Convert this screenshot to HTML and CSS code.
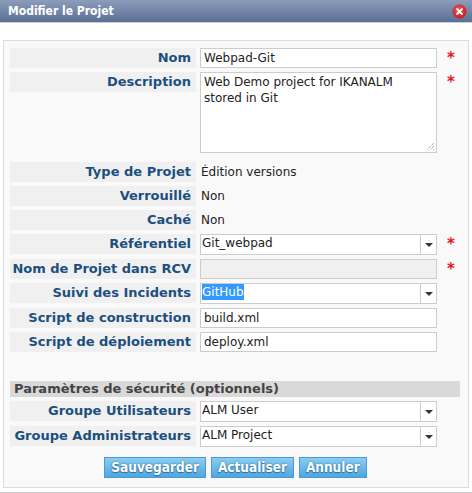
FILE: index.html
```html
<!DOCTYPE html>
<html lang="fr">
<head>
<meta charset="utf-8">
<title>Modifier le Projet</title>
<link rel="stylesheet" href="styles.css">
</head>
<body>
<div class="dialog">
  <div class="titlebar">
    <span class="title">Modifier le Projet</span>
    <svg class="close" width="15" height="15" viewBox="0 0 15 15">
      <defs>
        <radialGradient id="rg" cx="0.45" cy="0.4" r="0.6">
          <stop offset="0" stop-color="#f25a5a"/>
          <stop offset="1" stop-color="#c81d1d"/>
        </radialGradient>
      </defs>
      <circle cx="7.5" cy="7.5" r="7" fill="url(#rg)"/>
      <path d="M5 5 L10 10 M10 5 L5 10" stroke="#fff" stroke-width="1.8" stroke-linecap="round"/>
    </svg>
  </div>
  <div class="body">
    <div class="panel">
      <div class="form">
        <div class="label">Nom</div>
        <div class="input"><span class="txt">Webpad-Git</span></div>
        <div class="req">*</div>

        <div class="label">Description</div>
        <div class="textarea">Web Demo project for IKANALM stored in Git
          <svg class="grip" width="9" height="9" viewBox="0 0 9 9"><path d="M8 1 L1 8 M8 4 L4 8 M8 7 L7 8" stroke="#888" stroke-width="1" stroke-dasharray="1 1"/></svg>
        </div>
        <div class="req">*</div>

        <div class="label first">Type de Projet</div>
        <div class="value first">Édition versions</div>
        <div class="first"></div>

        <div class="label">Verrouillé</div>
        <div class="value">Non</div>
        <div></div>

        <div class="label">Caché</div>
        <div class="value">Non</div>
        <div></div>

        <div class="label">Référentiel</div>
        <div class="select"><span class="stxt">Git_webpad</span><span class="arrow"></span></div>
        <div class="req">*</div>

        <div class="label">Nom de Projet dans RCV</div>
        <div class="input disabled"></div>
        <div class="req">*</div>

        <div class="label">Suivi des Incidents</div>
        <div class="select"><span class="stxt"><span class="hl">GitHub</span></span><span class="arrow"></span></div>
        <div></div>

        <div class="label">Script de construction</div>
        <div class="input"><span class="txt">build.xml</span></div>
        <div></div>

        <div class="label">Script de déploiement</div>
        <div class="input"><span class="txt">deploy.xml</span></div>
        <div></div>
      </div>

      <div class="section">Paramètres de sécurité (optionnels)</div>

      <div class="form">
        <div class="label">Groupe Utilisateurs</div>
        <div class="select"><span class="stxt">ALM User</span><span class="arrow"></span></div>
        <div></div>

        <div class="label">Groupe Administrateurs</div>
        <div class="select"><span class="stxt">ALM Project</span><span class="arrow"></span></div>
        <div></div>
      </div>

      <div class="buttons">
        <button class="btn">Sauvegarder</button>
        <button class="btn">Actualiser</button>
        <button class="btn">Annuler</button>
      </div>
    </div>
  </div>
</div>
</body>
</html>
```
FILE: styles.css
```css
html, body {
  margin: 0;
  padding: 0;
  background: #fff;
}
.dialog {
  width: 472px;
  height: 493px;
  box-sizing: border-box;
  border-bottom: 1px solid #cfcfcf;
  font-family: "DejaVu Sans", Verdana, sans-serif;
}
.titlebar {
  height: 23px;
  box-sizing: border-box;
  display: flex;
  align-items: center;
  justify-content: space-between;
  padding: 0 5px 0 8px;
  background: linear-gradient(#8c9dba, #5a6f96);
  border-bottom: 1px solid #c9cfd9;
}
.title {
  color: #fff;
  font-family: "DejaVu Sans Condensed", "DejaVu Sans", sans-serif;
  font-weight: bold;
  font-size: 12px;
}
.close {
  display: block;
}
.body {
  padding: 17px 3px 0 3px;
}
.panel {
  width: 466px;
  box-sizing: border-box;
  border: 1px solid #ddd;
  background: #f9f9f9;
  padding: 7px 6px 9px 6px;
}
.form {
  display: grid;
  grid-template-columns: 186px 237px 1fr;
  column-gap: 4px;
  row-gap: 4px;
  align-items: start;
}
.label {
  height: 20px;
  background: #f0f0f0;
  text-align: right;
  padding-right: 5px;
  box-sizing: border-box;
  color: #1c4f7f;
  font-weight: bold;
  font-size: 13px;
  line-height: 20px;
  white-space: nowrap;
}
.form > .first {
  margin-top: 5px;
}
.value {
  color: #222;
  font-size: 12px;
  line-height: 20px;
  padding-left: 1px;
}
.input {
  height: 20px;
  box-sizing: border-box;
  background: #fff;
  border: 1px solid #ccc;
  padding-left: 3px;
  color: #222;
  font-size: 12px;
  line-height: 18px;
}
.input.disabled {
  background: #f0f0f0;
}
.textarea {
  position: relative;
  height: 81px;
  box-sizing: border-box;
  background: #fff;
  border: 1px solid #ccc;
  padding: 1px 20px 0 3px;
  color: #222;
  font-size: 12px;
  line-height: 16px;
}
.grip {
  position: absolute;
  right: 1px;
  bottom: 1px;
}
.select {
  height: 21px;
  box-sizing: border-box;
  background: #fff;
  border: 1px solid #ccc;
  display: flex;
  color: #222;
  font-size: 12px;
  line-height: 17px;
}
.stxt {
  flex: 1;
  padding-left: 1px;
}
.hl {
  background: #3399ff;
  color: #fff;
  padding: 1px 0;
}
.arrow {
  width: 15px;
  border-left: 1px solid #ccc;
  position: relative;
}
.arrow::after {
  content: "";
  position: absolute;
  left: 4px;
  top: 8px;
  border-left: 4px solid transparent;
  border-right: 4px solid transparent;
  border-top: 4px solid #333;
}
.req {
  color: #e8161a;
  font-weight: bold;
  font-size: 15px;
  line-height: 20px;
  padding-left: 6px;
}
.section {
  margin: 29px 0 4px 0;
  width: 450px;
  height: 16px;
  background: #d9d9d9;
  color: #444;
  font-weight: bold;
  font-size: 13px;
  line-height: 16px;
  padding-left: 4px;
  box-sizing: border-box;
}
.buttons {
  display: flex;
  justify-content: center;
  gap: 5px;
  margin-top: 10px;
  padding-right: 1px;
}
.btn {
  height: 21px;
  border: 1px solid #4a9ad6;
  background: linear-gradient(#8bcdf2, #4fa6df);
  color: #fff;
  font-family: "DejaVu Sans Condensed", "DejaVu Sans", sans-serif;
  font-weight: bold;
  font-size: 13.5px;
  padding: 0 6px;
  text-shadow: 0 0 2px #2c6e9e, 0 1px 1px #2c6e9e;
  line-height: 19px;
}
```
